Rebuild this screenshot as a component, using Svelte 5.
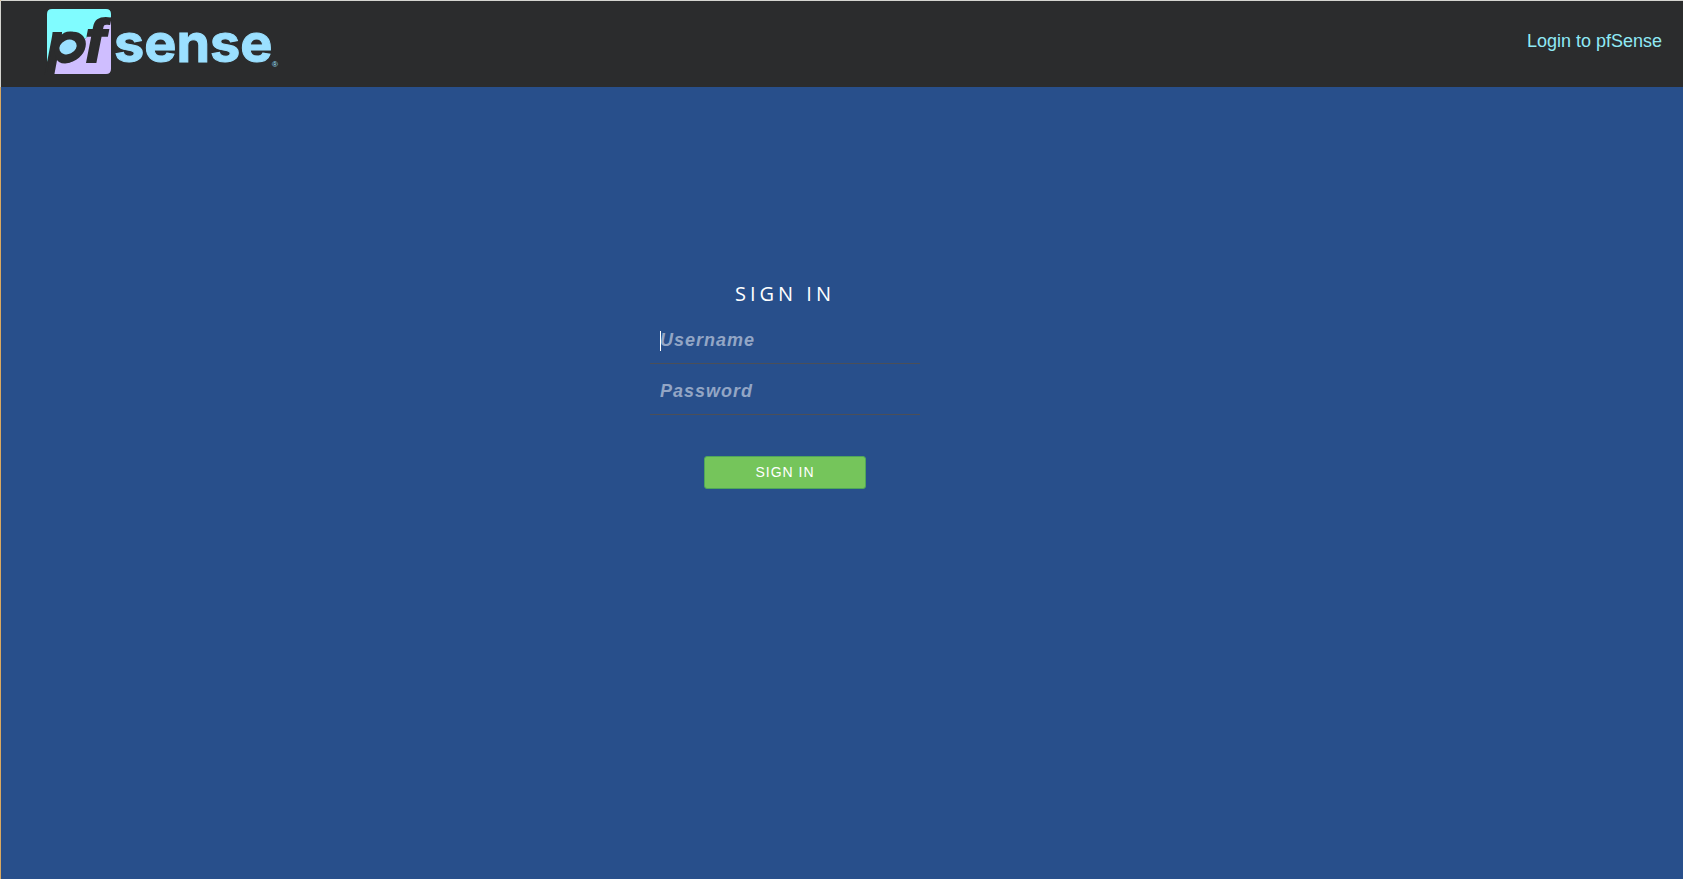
<script lang="ts">
  let username = $state("");
  let password = $state("");

  function signIn(event: SubmitEvent) {
    event.preventDefault();
  }
</script>

<div class="page">
  <header class="topbar">
    <a href="/" class="brand" aria-label="pfSense home">
      <svg class="logo" width="236" height="68" viewBox="0 0 236 68" role="img" aria-label="pfSense">
        <defs>
          <clipPath id="tile">
            <path d="M5 0H59Q64 0 64 5V60Q64 65 59 65H6L9 53L0 53V5Q0 0 5 0Z" />
          </clipPath>
        </defs>
        <g clip-path="url(#tile)">
          <path class="tile-top" d="M0 0H64V8L38 30L8 46L0 53Z" />
          <path class="tile-bottom" d="M64 8V65H0L9 50L38 30Z" />
        </g>
        <text class="mark" y="53"><tspan class="mark-p" x="0">p</tspan><tspan x="38">f</tspan></text>
        <ellipse class="tile-ring" cx="23" cy="38" rx="17" ry="14" transform="rotate(-40 23 38)" />
        <ellipse class="tile-eye" cx="21" cy="38" rx="9" ry="7" transform="rotate(-25 21 38)" />
        <text class="word" x="67" y="53">sense</text>
        <text class="reg" x="225" y="58">®</text>
      </svg>
    </a>
    <span class="host">Login to pfSense</span>
  </header>

  <main class="container">
    <form class="login" onsubmit={signIn}>
      <h1>SIGN IN</h1>

      <div class="field">
        <input type="text" placeholder="Username" aria-label="Username" autocomplete="off" bind:value={username} />
        {#if !username}
          <span class="caret"></span>
        {/if}
      </div>

      <div class="field">
        <input type="password" placeholder="Password" aria-label="Password" autocomplete="off" bind:value={password} />
      </div>

      <button type="submit" class="submit">SIGN IN</button>
    </form>
  </main>
</div>

<style>
  :global(body) {
    background: #284f8b;
  }

  .page {
    min-height: 100vh;
    box-sizing: border-box;
    border-top: 1px solid #d5d5d0;
    border-left: 1px solid #d9a860;
    font-family: "Liberation Sans", Arial, sans-serif;
  }

  /* Header */
  .topbar {
    display: flex;
    align-items: center;
    justify-content: space-between;
    height: 86px;
    box-sizing: border-box;
    margin-left: -1px;
    padding: 0 21px 2px 46px;
    border-left: 1px solid #d5d5d0;
    background: #2b2c2d;
  }

  .brand {
    display: block;
  }

  .logo {
    display: block;
    overflow: visible;
  }

  .tile-top {
    fill: #80fcff;
  }

  .tile-bottom {
    fill: #cfbeff;
  }

  .tile-ring {
    fill: #2b2c2d;
  }

  .tile-eye,
  .word {
    fill: #9be0ff;
  }

  .word {
    font-family: Inter, "Open Sans", sans-serif;
    font-size: 54px;
    font-weight: 700;
    stroke: #9be0ff;
    stroke-width: 1;
  }

  .mark {
    fill: #2b2c2d;
    font-size: 61px;
    font-style: italic;
    font-weight: 700;
    stroke: #2b2c2d;
    stroke-width: 2;
  }

  .mark-p {
    font-size: 56px;
  }

  .reg {
    fill: #9be0ff;
    font-size: 8px;
  }

  .host {
    padding-bottom: 4px;
    color: #8fe9f5;
    font-size: 18px;
    line-height: 24px;
  }

  /* Login form */
  .container {
    display: grid;
    grid-template-columns: repeat(3, 1fr);
    max-width: 1170px;
    margin: 0 auto;
    padding-top: 193px;
  }

  .login {
    grid-column: 2;
    display: flex;
    flex-direction: column;
    width: 270px;
    margin-left: 3px;
  }

  h1 {
    margin: 0 0 7px;
    color: #fff;
    font-family: "Open Sans", sans-serif;
    font-size: 20px;
    font-weight: 400;
    line-height: 28px;
    letter-spacing: 4px;
    text-align: center;
  }

  .field {
    position: relative;
    margin-bottom: 2px;
  }

  input {
    display: block;
    width: 100%;
    height: 49px;
    box-sizing: border-box;
    padding: 2px 10px 0;
    border: 0;
    border-bottom: 1px solid #4b4f58;
    border-radius: 0;
    outline: none;
    background: transparent;
    color: #fff;
    font-family: inherit;
    font-size: 18px;
    font-style: italic;
    font-weight: 700;
    letter-spacing: 1px;
  }

  input::placeholder {
    color: #93a6c5;
    opacity: 1;
  }

  .caret {
    position: absolute;
    top: 16px;
    left: 10px;
    width: 1px;
    height: 20px;
    background: #fff;
  }

  .submit {
    align-self: center;
    width: 162px;
    height: 33px;
    margin-top: 39px;
    padding: 0 0 1px;
    border: 1px solid #4fa65a;
    border-radius: 3px;
    background: #75c55b;
    color: #fff;
    font-family: inherit;
    font-size: 14px;
    letter-spacing: 1px;
    cursor: pointer;
  }
</style>
